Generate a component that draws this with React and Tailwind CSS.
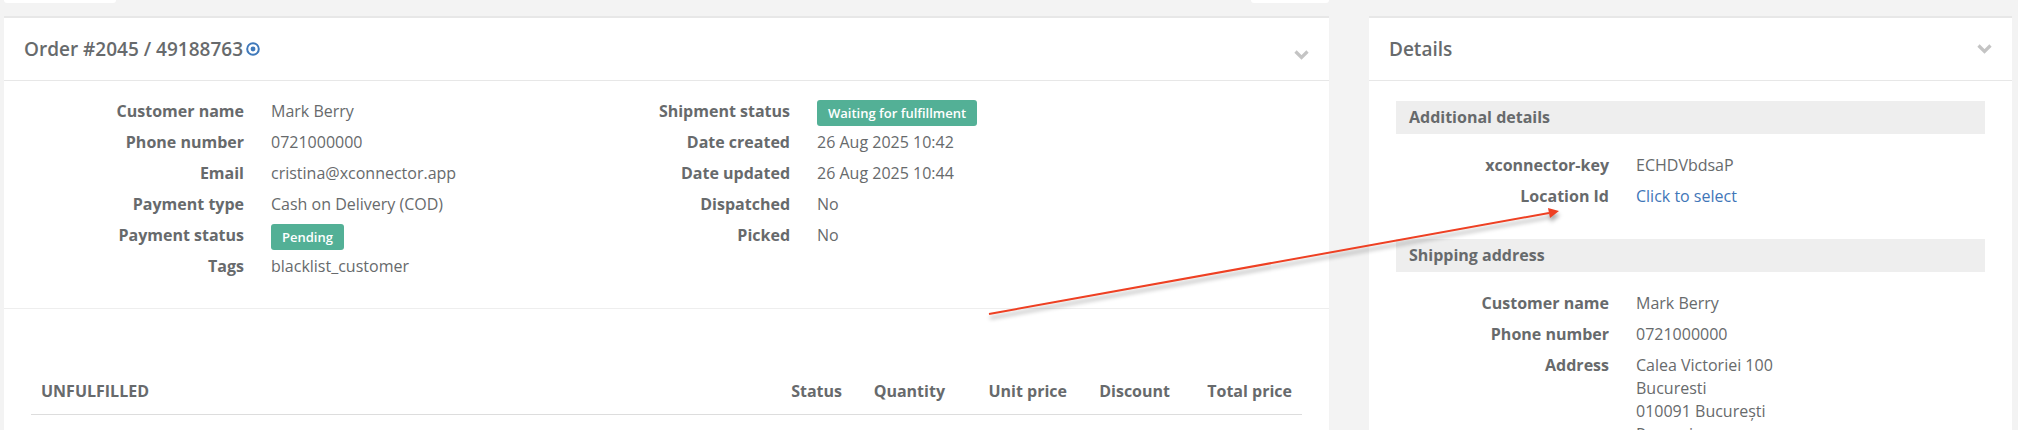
import React from "react";

const orderFields = [
  { label: "Customer name", value: "Mark Berry" },
  { label: "Phone number", value: "0721000000" },
  { label: "Email", value: "cristina@xconnector.app" },
  { label: "Payment type", value: "Cash on Delivery (COD)" },
  { label: "Payment status", value: "Pending", badge: true },
  { label: "Tags", value: "blacklist_customer" },
];

const shipmentFields = [
  { label: "Shipment status", value: "Waiting for fulfillment", badge: true },
  { label: "Date created", value: "26 Aug 2025 10:42" },
  { label: "Date updated", value: "26 Aug 2025 10:44" },
  { label: "Dispatched", value: "No" },
  { label: "Picked", value: "No" },
];

const additionalFields = [
  { label: "xconnector-key", value: "ECHDVbdsaP" },
  { label: "Location Id", value: "Click to select", link: true },
];

const shippingFields = [
  { label: "Customer name", value: "Mark Berry" },
  { label: "Phone number", value: "0721000000" },
  {
    label: "Address",
    value: (
      <>
        Calea Victoriei 100
        <br />
        Bucuresti
        <br />
        010091 București
        <br />
        Romania
      </>
    ),
  },
];

function Value({ field }) {
  if (field.badge) {
    return (
      <span className="block w-fit rounded-[3px] bg-[#53b096] px-[11px] text-[13px] leading-[26px] font-semibold text-white">
        {field.value}
      </span>
    );
  }
  if (field.link) {
    return <a href="#location" className="text-[#3f76b8]">{field.value}</a>;
  }
  return field.value;
}

function FieldList({ fields, columns }) {
  return (
    <dl className={`grid content-start gap-y-2 leading-[23px] ${columns}`}>
      {fields.map((field) => (
        <React.Fragment key={field.label}>
          <dt className="text-right font-bold">{field.label}</dt>
          <dd className={field.badge ? "h-[23px]" : ""}>
            <Value field={field} />
          </dd>
        </React.Fragment>
      ))}
    </dl>
  );
}

function CollapseButton({ className = "" }) {
  return (
    <button type="button" aria-label="Collapse" className={className}>
      <svg className="block h-[10px] w-[15px]" viewBox="0 0 15 10" fill="none">
        <path d="M1.5 1.5L7.5 7.5L13.5 1.5" stroke="#c4c4c4" strokeWidth="3.2" />
      </svg>
    </button>
  );
}

function Panel({ title, children, className, action }) {
  return (
    <section className={`min-w-0 border-t-2 border-[#e7e7e7] bg-white ${className}`}>
      <header className="flex h-[63px] items-center justify-between border-b border-[#e7e7e7] px-5">
        <h5 className="flex items-center gap-[3px] text-[19px] leading-7 font-semibold">{title}</h5>
        {action}
      </header>
      {children}
    </section>
  );
}

export default function App() {
  return (
    <div className="relative h-screen overflow-hidden bg-[#f3f3f3] font-['Open_Sans',sans-serif] text-base text-[#676a6c]">
      <div className="flex gap-10 pr-[6px] pl-1">
        <div className="flex h-4 flex-[1325] justify-between">
          <div className="h-[3px] w-[112px] rounded-b bg-white" />
          <div className="h-[3px] w-[78px] rounded-b bg-white" />
        </div>
        <div className="flex-[643]" />
      </div>

      <div className="flex gap-10 pr-[6px] pl-1">
        <Panel
          className="flex-[1325]"
          title={
            <>
              Order #2045 / 49188763
              <a href="#track" aria-label="Track order">
                <svg className="block size-[14px]" viewBox="0 0 14 14" fill="none">
                  <circle cx="7" cy="7" r="5.8" stroke="#3f79bb" strokeWidth="2" />
                  <circle cx="7" cy="7" r="2.4" fill="#3f79bb" />
                </svg>
              </a>
            </>
          }
          action={<CollapseButton className="mt-3" />}
        >
          <div className="grid grid-cols-[546px_1fr] pt-[19px] pb-[30px]">
            <FieldList fields={orderFields} columns="grid-cols-[240px_1fr] gap-x-[27px]" />
            <FieldList fields={shipmentFields} columns="grid-cols-[240px_1fr] gap-x-[27px]" />
          </div>

          <div className="border-t border-[#eeeeee] px-[27px] pt-[59px]">
            <table className="w-full border-collapse text-right">
              <thead>
                <tr className="h-[46px] border-b border-[#dddddd]">
                  <th className="px-[10px] text-left">UNFULFILLED</th>
                  <th className="w-[70px] px-[10px]">Status</th>
                  <th className="w-[103px] px-[10px]">Quantity</th>
                  <th className="w-[122px] px-[10px]">Unit price</th>
                  <th className="w-[103px] px-[10px]">Discount</th>
                  <th className="w-[122px] px-[10px]">Total price</th>
                </tr>
              </thead>
            </table>
          </div>
        </Panel>

        <Panel className="flex-[643]" title="Details" action={<CollapseButton />}>
          <div className="px-[27px] pt-5">
            <h6 className="bg-[#eeeeee] px-[13px] leading-[33px] font-bold">Additional details</h6>
            <div className="pt-5 pb-[31px]">
              <FieldList fields={additionalFields} columns="grid-cols-[213px_1fr] gap-x-[27px]" />
            </div>
            <h6 className="bg-[#eeeeee] px-[13px] leading-[33px] font-bold">Shipping address</h6>
            <div className="pt-5">
              <FieldList fields={shippingFields} columns="grid-cols-[213px_1fr] gap-x-[27px]" />
            </div>
          </div>
        </Panel>
      </div>

      {/* Callout arrow pointing at the location link */}
      <svg
        className="pointer-events-none absolute top-[200px] left-[979px] h-[130px] w-[590px] drop-shadow-[1px_4px_2px_rgba(0,0,0,0.35)]"
        viewBox="0 0 590 130"
      >
        <path d="M10 114L570 13" stroke="#ee4023" strokeWidth="2" />
        <path d="M580 11L569 8L571 18Z" fill="#ee4023" />
      </svg>
    </div>
  );
}
